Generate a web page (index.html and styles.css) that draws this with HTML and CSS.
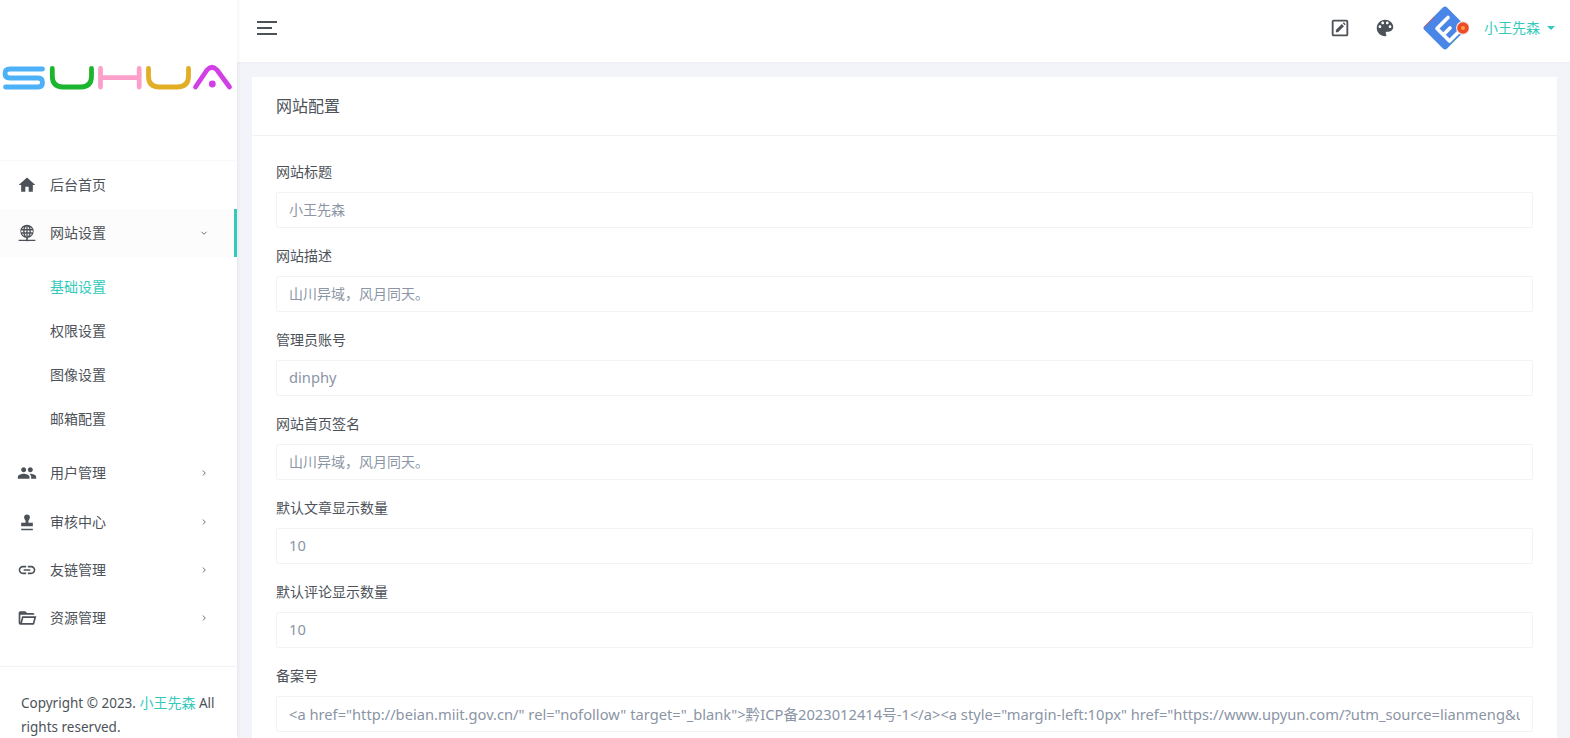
FILE: index.html
```html
<!DOCTYPE html>
<html lang="zh-CN">
<head>
<meta charset="utf-8">
<title>网站配置</title>
<link rel="stylesheet" href="styles.css">
</head>
<body>
<div class="layout">
  <aside class="sidebar">
    <div class="logo">
      <svg class="logo-svg" viewBox="0 0 238 160" width="238" height="160" role="img" aria-label="SUHUA">
        <path class="ls" stroke="#4db1f7" d="M42.500 69H10Q5 69 5 73.500T10 78H38Q42.500 78 42.500 82.500T38 87H5.500"/>
        <path class="ls" stroke="#1cb52e" d="M52.300 68.500V76Q52.300 87 63 87H81Q91.500 87 91.500 76V68.500"/>
        <path class="ls" stroke="#fd9fcb" d="M100.500 68.500V87M139.200 68.500V87M100.500 77.600H139.200"/>
        <path class="ls" stroke="#e2ae25" d="M148.500 68.500V76Q148.500 87 159 87H177Q188.500 87 188.500 76V68.500"/>
        <path class="ls" stroke="#d33fe6" d="M195.500 87L207 70Q212 64.500 217 70L229.500 87"/>
        <circle cx="212.300" cy="84" r="3.400" fill="#d33fe6"/>
      </svg>
    </div>
    <nav class="nav">
      <a class="nav-item">
        <svg class="ico" viewBox="0 0 24 24"><path d="M10 20v-6h4v6h5v-8h3L12 3 2 12h3v8z"/></svg>
        <span class="nav-text">后台首页</span>
      </a>
      <a class="nav-item open">
        <svg class="ico" viewBox="0 0 24 24"><path fill-rule="evenodd" d="M12 2a8 8 0 1 1 0 16a8 8 0 0 1 0-16zM11.200 3.900c-.9.8-1.600 2-1.900 3.400h1.900zM12.800 3.900v3.400h1.900c-.3-1.400-1-2.600-1.900-3.400zM7.700 7.300c.2-1 .5-1.900 1-2.600c-1.200.6-2.100 1.500-2.700 2.600zM5.200 8.900c-.2.700-.2 1.600 0 2.300h2.300c-.1-.8-.1-1.500 0-2.300zM9.100 8.900c-.1.700-.1 1.500 0 2.300h2.100V8.900zM12.800 8.900v2.300h2.100c.1-.8.1-1.500 0-2.300zM16.500 8.900c.1.800.1 1.500 0 2.300h2.300c.2-.7.2-1.600 0-2.300zM9.300 12.800c.3 1.400 1 2.600 1.900 3.300v-3.300zM12.800 12.800v3.300c.9-.7 1.600-1.900 1.900-3.300zM16.300 7.300H18c-.6-1.100-1.500-2-2.700-2.600c.5.700.8 1.600 1 2.600zM6 12.800c.6 1.100 1.500 2 2.700 2.500c-.5-.7-.8-1.600-1-2.500zM16.300 12.800c-.2.900-.5 1.800-1 2.500c1.200-.5 2.100-1.400 2.700-2.500z"/><path d="M11 18h2v2h9v1.700H13v.3h-2v-.3H2V20h9z"/></svg>
        <span class="nav-text">网站设置</span>
        <svg class="chev" viewBox="0 0 8 8"><path d="M1.500 2.800L4 5.300L6.500 2.800"/></svg>
      </a>
      <div class="sub">
        <a class="sub-item active">基础设置</a>
        <a class="sub-item">权限设置</a>
        <a class="sub-item">图像设置</a>
        <a class="sub-item">邮箱配置</a>
      </div>
      <a class="nav-item">
        <svg class="ico" viewBox="0 0 24 24"><path d="M16 11c1.660 0 2.990-1.340 2.990-3S17.660 5 16 5c-1.660 0-3 1.340-3 3s1.340 3 3 3zm-8 0c1.660 0 2.990-1.340 2.990-3S9.660 5 8 5C6.340 5 5 6.340 5 8s1.340 3 3 3zm0 2c-2.330 0-7 1.170-7 3.500V19h14v-2.500c0-2.330-4.670-3.500-7-3.500zm8 0c-.29 0-.62.02-.97.05 1.160.84 1.970 1.970 1.970 3.450V19h6v-2.500c0-2.330-4.670-3.500-7-3.500z"/></svg>
        <span class="nav-text">用户管理</span>
        <svg class="chev" viewBox="0 0 8 8"><path d="M2.800 1.500L5.300 4L2.800 6.500"/></svg>
      </a>
      <a class="nav-item gap-top">
        <svg class="ico" viewBox="0 0 24 24"><path d="M5 20h14v2H5zM12 3a3.500 3.500 0 0 1 3.500 3.500c0 1.200-.6 2.100-1.200 3c-.5.8-.8 1.500-.8 2.500c0 .6.400 1 1 1h4.500v4H5v-4h4.500c.6 0 1-.4 1-1c0-1-.3-1.700-.8-2.500c-.6-.9-1.200-1.800-1.200-3A3.500 3.500 0 0 1 12 3z"/></svg>
        <span class="nav-text">审核中心</span>
        <svg class="chev" viewBox="0 0 8 8"><path d="M2.800 1.500L5.300 4L2.800 6.500"/></svg>
      </a>
      <a class="nav-item">
        <svg class="ico" viewBox="0 0 24 24"><path d="M3.900 12c0-1.710 1.390-3.100 3.100-3.100h4V7H7c-2.760 0-5 2.240-5 5s2.240 5 5 5h4v-1.900H7c-1.710 0-3.100-1.390-3.100-3.100zM8 13h8v-2H8v2zm9-6h-4v1.900h4c1.710 0 3.100 1.390 3.100 3.100s-1.390 3.100-3.100 3.100h-4V17h4c2.760 0 5-2.240 5-5s-2.240-5-5-5z"/></svg>
        <span class="nav-text">友链管理</span>
        <svg class="chev" viewBox="0 0 8 8"><path d="M2.800 1.500L5.300 4L2.800 6.500"/></svg>
      </a>
      <a class="nav-item">
        <svg class="ico" viewBox="0 0 24 24"><path d="M6.100 10L4 18V8h17a2 2 0 0 0-2-2h-7l-2-2H4a2 2 0 0 0-2 2v12a2 2 0 0 0 2 2h15c.9 0 1.700-.6 1.900-1.500l2.300-8.500H6.100M19 18H6l1.600-6h13L19 18z"/></svg>
        <span class="nav-text">资源管理</span>
        <svg class="chev" viewBox="0 0 8 8"><path d="M2.800 1.500L5.300 4L2.800 6.500"/></svg>
      </a>
    </nav>
    <footer class="side-foot">Copyright © 2023. <a class="foot-link">小王先森</a> All rights reserved.</footer>
  </aside>
  <div class="main">
    <header class="topbar">
      <button class="burger" type="button" aria-label="menu"><span class="b1"></span><span class="b2"></span><span class="b3"></span></button>
      <div class="top-right">
        <svg class="top-ico" viewBox="0 0 24 24"><path fill-rule="evenodd" d="M5 3h14a2 2 0 0 1 2 2v14a2 2 0 0 1-2 2H5a2 2 0 0 1-2-2V5a2 2 0 0 1 2-2zm0 2v14h14V5z"/><path d="M7.500 16.500v-2.300l6.500-6.500l2.300 2.300l-6.500 6.500zM15 6.800l.7-.7a.6.6 0 0 1 .8 0l1.400 1.400a.6.6 0 0 1 0 .8l-.7.7z"/></svg>
        <svg class="top-ico palette" viewBox="0 0 24 24"><path d="M12 3c-4.970 0-9 4.030-9 9s4.030 9 9 9c.83 0 1.500-.67 1.500-1.500 0-.39-.15-.74-.39-1.010-.23-.26-.38-.61-.38-.99 0-.83.67-1.500 1.500-1.500H16c2.760 0 5-2.240 5-5 0-4.420-4.030-8-9-8zm-5.500 9c-.83 0-1.500-.67-1.500-1.500S5.670 9 6.500 9 8 9.670 8 10.500 7.330 12 6.500 12zm3-4C8.670 8 8 7.330 8 6.500S8.670 5 9.500 5s1.500.67 1.500 1.500S10.330 8 9.500 8zm5 0c-.83 0-1.500-.67-1.500-1.500S13.670 5 14.500 5s1.500.67 1.500 1.500S15.330 8 14.500 8zm3 4c-.83 0-1.500-.67-1.500-1.500S16.670 9 17.500 9s1.500.67 1.500 1.500-.67 1.500-1.500 1.500z"/></svg>
        <svg class="avatar" viewBox="0 0 48 48" width="48" height="48">
          <rect x="8" y="8" width="32" height="32" rx="3" fill="#4a86e8" transform="rotate(45 24 24)"/>
          <path d="M3.500 23L13 13" stroke="#d9584a" stroke-width="1" fill="none"/>
          <path d="M35 35L29 41" stroke="#4fae7a" stroke-width="1" fill="none"/>
          <path d="M27 13.500L16 24.500L28.500 37L37 28.500M22.300 30.800L29 24" stroke="#fff" stroke-width="3.600" fill="none" stroke-linecap="round" stroke-linejoin="round"/>
          <circle cx="42" cy="24" r="7" fill="#f4e6dc"/>
          <circle cx="42" cy="24" r="5.800" fill="#ee4a2a"/>
          <circle cx="42" cy="24" r="2" fill="#f7a733"/>
        </svg>
        <span class="user">小王先森</span>
        <span class="caret"></span>
      </div>
    </header>
    <main class="content">
      <section class="card">
        <h1 class="card-title">网站配置</h1>
        <form class="form">
          <div class="field"><label class="field-label">网站标题</label><input class="field-input" readonly value="小王先森"></div>
          <div class="field"><label class="field-label">网站描述</label><input class="field-input" readonly value="山川异域，风月同天。"></div>
          <div class="field"><label class="field-label">管理员账号</label><input class="field-input latin" readonly value="dinphy"></div>
          <div class="field"><label class="field-label">网站首页签名</label><input class="field-input" readonly value="山川异域，风月同天。"></div>
          <div class="field"><label class="field-label">默认文章显示数量</label><input class="field-input latin" readonly value="10"></div>
          <div class="field"><label class="field-label">默认评论显示数量</label><input class="field-input latin" readonly value="10"></div>
          <div class="field"><label class="field-label">备案号</label><input class="field-input latin" readonly value='&lt;a href="http://beian.miit.gov.cn/" rel="nofollow" target="_blank"&gt;黔ICP备2023012414号-1&lt;/a&gt;&lt;a style="margin-left:10px" href="https://www.upyun.com/?utm_source=lianmeng&amp;utm_medium=referral"'></div>
        </form>
      </section>
    </main>
  </div>
</div>
</body>
</html>
```
FILE: styles.css
```css
* { box-sizing: border-box; }
html, body { margin: 0; height: 100%; overflow: hidden; }
body {
  font-family: "Noto Sans", "Noto Sans CJK SC", sans-serif;
  font-size: 14px;
  color: #4d5259;
  background: #f3f4f9;
}
.layout { display: flex; height: 738px; overflow: hidden; }

.sidebar {
  width: 237px;
  flex: none;
  display: flex;
  flex-direction: column;
  background: #fff;
  box-shadow: 0 0 5px rgba(0, 0, 0, .08);
  z-index: 2;
}
.logo { height: 161px; border-bottom: 1px solid #f9f9f9; flex: none; }
.logo-svg { display: block; }
.ls { fill: none; stroke-width: 4.800; stroke-linecap: round; stroke-linejoin: round; }

.nav { flex: 1; display: flex; flex-direction: column; }
.nav-item {
  height: 48px;
  flex: none;
  display: flex;
  align-items: center;
  padding-left: 17px;
  padding-right: 29px;
}
.nav-item.open { background: #fcfcfc; border-right: 3px solid #33cabb; padding-right: 26px; }
.nav-item.gap-top { margin-top: 1px; }
.ico { width: 20px; height: 20px; fill: #4d5259; flex: none; }
.nav-text { margin-left: 13px; flex: 1; line-height: 20px; }
.chev { width: 8px; height: 8px; fill: none; stroke: #6d7279; stroke-width: 1; flex: none; }
.sub { padding: 8px 0; display: flex; flex-direction: column; }
.sub-item { height: 44px; line-height: 44px; padding-left: 50px; }
.sub-item.active { color: #33cabb; }
.side-foot {
  flex: none;
  height: 72px;
  border-top: 1px solid #f1f2f4;
  padding: 24px 21px 0;
  font-size: 13.500px;
  line-height: 24px;
}
.foot-link { color: #33cabb; font-size: 14px; }

.main { flex: 1; min-width: 0; display: flex; flex-direction: column; }
.topbar {
  height: 62px;
  flex: none;
  background: #fff;
  display: flex;
  align-items: center;
  justify-content: space-between;
  padding: 0 15px 6px 20px;
  box-shadow: 0 1px 2px rgba(0, 0, 0, .03);
}
.burger {
  width: 21px;
  height: 14px;
  padding: 0;
  border: 0;
  background: none;
  display: flex;
  flex-direction: column;
  justify-content: space-between;
  align-items: flex-start;
}
.b1, .b2, .b3 { display: block; height: 2px; background: #4d5259; }
.b1 { width: 20px; }
.b2 { width: 15px; }
.b3 { width: 20px; }
.top-right { display: flex; align-items: center; }
.top-ico { width: 22px; height: 22px; fill: #4d5259; flex: none; }
.palette { margin-left: 23px; }
.avatar { margin-left: 25px; flex: none; }
.user { color: #33cabb; margin-left: 15px; line-height: 20px; }
.caret {
  margin-left: 7px;
  width: 0;
  height: 0;
  border-left: 4px solid transparent;
  border-right: 4px solid transparent;
  border-top: 4px solid #33cabb;
}

.content { flex: 1; min-height: 0; padding: 15px 13px 0 15px; }
.card { background: #fff; box-shadow: 0 1px 3px rgba(0, 0, 0, .02); }
.card-title {
  margin: 0;
  height: 59px;
  padding: 0 24px;
  font-size: 16px;
  font-weight: 400;
  line-height: 59px;
  border-bottom: 1px solid #f1f2f4;
}
.form { padding: 24px 24px 0; }
.field { display: flex; flex-direction: column; height: 84px; }
.field-label { height: 32px; line-height: 24px; }
.field-input {
  height: 36px;
  width: 100%;
  padding: 0 12px 2px;
  border: 1px solid #f3f3f3;
  border-radius: 2px;
  background: #fff;
  color: #8b95a5;
  font: inherit;
  outline: none;
}
.field-input.latin { font-size: 14.700px; }
```
